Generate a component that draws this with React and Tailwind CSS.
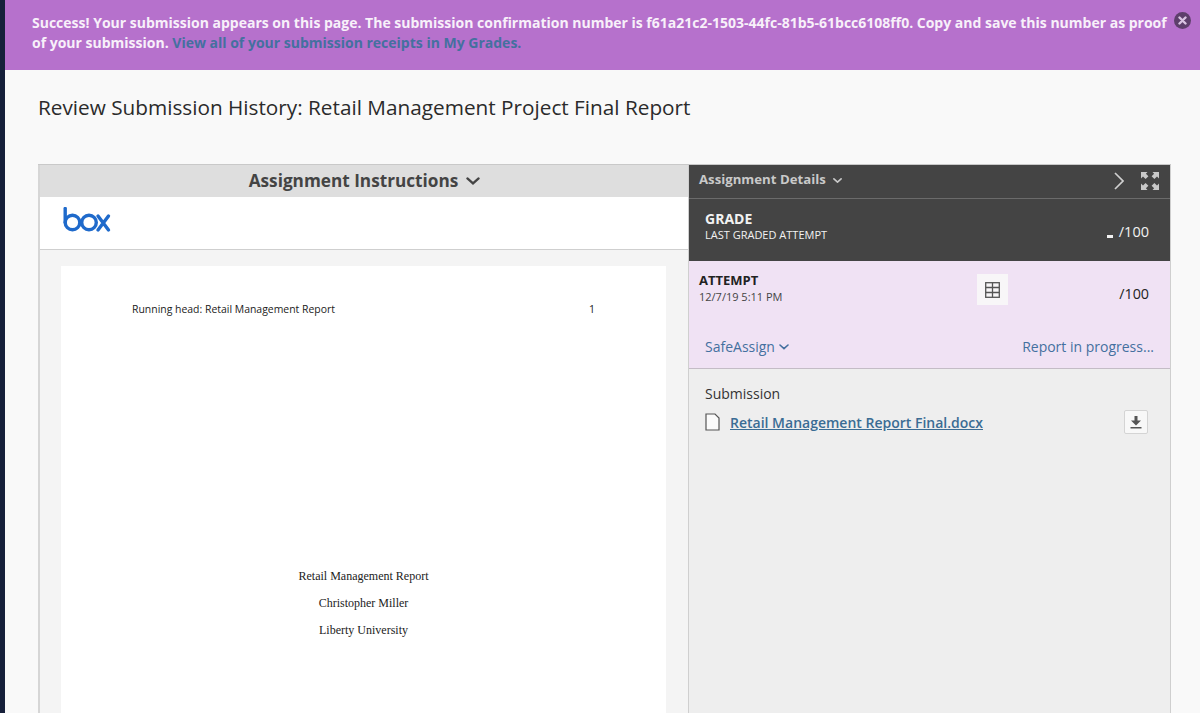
import React from "react";

const BoxLogo = () => (
  <svg width="48" height="26" viewBox="0 0 48 26" fill="none" stroke="#1f6acb" strokeWidth="3.4">
    <path d="M2.2 1.5v14" strokeLinecap="round" />
    <circle cx="9.5" cy="15.5" r="7.3" />
    <circle cx="26" cy="15.5" r="7.3" />
    <path d="M35 9l10.5 14M45.5 9L35 23" strokeLinecap="round" />
  </svg>
);

const ExpandIcon = () => (
  <svg width="18" height="18" viewBox="0 0 18 18" fill="#c9c9c9">
    <path d="M0 0h6.5L4.9 1.7 7.4 4.2 4.6 7 2 4.6 0 6.5zM18 0h-6.5l1.6 1.7-2.5 2.5L13.4 7 16 4.6l2 1.9zM0 18h6.5l-1.6-1.7 2.5-2.5L4.6 11 2 13.4l-2-1.9zM18 18h-6.5l1.6-1.7-2.5-2.5 2.8-2.8 2.6 2.4 2-1.9z" />
  </svg>
);

const GridIcon = () => (
  <svg width="15" height="16" viewBox="0 0 15 16" fill="none" stroke="#555" strokeWidth="1.3">
    <rect x="0.7" y="0.7" width="13.6" height="14.6" />
    <path d="M0.7 5.5h13.6M0.7 10.5h13.6M7.5 0.7v14.6" />
  </svg>
);

const FileIcon = () => (
  <svg width="15" height="18" viewBox="0 0 15 18" fill="#fbfbfb" stroke="#555" strokeWidth="1.2">
    <path d="M1 1h9l4 4v12H1z" />
  </svg>
);

const DownloadIcon = () => (
  <svg width="12" height="13" viewBox="0 0 12 13" fill="#555">
    <path d="M4.5 0h3v4.5H11L6 9.5 1 4.5h3.5zM0.5 11h11v1.6H.5z" />
  </svg>
);

const DownChevron = ({ size, color, width }) => (
  <svg width={size} height={size * 0.6} viewBox="0 0 10 6" fill="none" stroke={color} strokeWidth={width} strokeLinecap="round">
    <path d="M1 1l4 3.6L9 1" />
  </svg>
);

export default function App() {
  return (
    <div className="h-[713px] overflow-hidden flex bg-[#f9f9f9] font-['Open_Sans',sans-serif]">
      <div className="w-[5px] shrink-0 bg-[#16203a]" />
      <div className="flex-1 min-w-0">
        {/* success banner */}
        <div className="h-[70px] bg-[#b671cc] pl-[27px] pt-[13px] flex items-start">
          <p className="w-[1142px] text-[14px] leading-5 font-bold text-[#f8f0fa]">
            Success! Your submission appears on this page. The submission confirmation number is f61a21c2-1503-44fc-81b5-61bcc6108ff0. Copy and save this number as proof of your submission.{" "}
            <span className="text-[#44709f]">View all of your submission receipts in My Grades.</span>
          </p>
          <div className="w-[17px] h-[17px] rounded-full bg-[#5d3f6b] flex items-center justify-center -mt-[1px]">
            <svg width="9" height="9" viewBox="0 0 9 9" stroke="#d9c4e2" strokeWidth="2.4" strokeLinecap="round">
              <path d="M1.5 1.5l6 6M7.5 1.5l-6 6" />
            </svg>
          </div>
        </div>

        <h1 className="pl-[33px] pt-[23px] h-[94px] text-[20.75px] leading-[28px] text-[#2b2b2b]">
          Review Submission History: Retail Management Project Final Report
        </h1>

        <div className="ml-[33px] w-[1133px] flex border-t border-[#c9c9c9]">
          {/* left panel */}
          <div className="w-[650px] shrink-0 border-l-2 border-[#d6d6d6] bg-[#f4f4f4]">
            <div className="h-[32px] bg-[#dedede] flex items-center justify-center gap-[8px] pl-[1px]">
              <span className="text-[17.2px] font-bold text-[#444]">Assignment Instructions</span>
              <DownChevron size={14} color="#444" width={1.6} />
            </div>
            <div className="h-[53px] bg-white border-b border-[#cfcfcf] pl-[23px] pt-[10px]">
              <BoxLogo />
            </div>
            <div className="pl-[21px] pt-4">
              <div className="w-[605px] h-[460px] bg-white pt-[35px]">
                <div className="flex pl-[71px] w-[534px] justify-between text-[10.45px] leading-4 text-[#222]">
                  <span>Running head: Retail Management Report</span>
                  <span>1</span>
                </div>
                <div className="mt-[251px] flex flex-col items-center gap-[11px] font-['Liberation_Serif',serif] text-[12px] leading-4 text-[#222]">
                  <p>Retail Management Report</p>
                  <p>Christopher Miller</p>
                  <p>Liberty University</p>
                </div>
              </div>
            </div>
          </div>

          {/* right panel */}
          <div className="flex-1 min-w-0 border-x border-[#cfcfcf] bg-[#eeeeee]">
            <div className="h-[96px] bg-[#444444]">
              <div className="h-[34px] border-b border-[#6b6b6b] flex items-center pl-[10px] pr-[11px] pb-[4px]">
                <span className="text-[13.2px] font-bold text-[#c9c9c9]">Assignment Details</span>
                <div className="ml-[7px] mt-[2px]">
                  <DownChevron size={9} color="#c9c9c9" width={1.8} />
                </div>
                <svg className="ml-auto mr-[17px] mt-[3px]" width="10" height="18" viewBox="0 0 10 18" fill="none" stroke="#d0d0d0" strokeWidth="1.7">
                  <path d="M1 1l8 8-8 8" />
                </svg>
                <div className="mt-[3px]">
                  <ExpandIcon />
                </div>
              </div>
              <div className="flex justify-between pl-[16px] pr-[21px] pt-[11px]">
                <div>
                  <p className="text-[14px] leading-[18px] font-bold text-[#f2f2f2]">GRADE</p>
                  <p className="text-[11px] leading-[14px] text-[#f2f2f2]">LAST GRADED ATTEMPT</p>
                </div>
                <div className="flex items-center gap-[6px] h-[44px] text-[14.5px] text-[#f2f2f2]">
                  <span className="w-[6px] h-[3px] bg-[#f2f2f2] mt-[8px]" />
                  <span>/100</span>
                </div>
              </div>
            </div>

            <div className="h-[108px] bg-[#f0e2f4] border-b border-[#c4bcc6] pl-[10px] pr-[16px]">
              <div className="h-[75px] flex items-start pt-[10px] pr-[5px]">
                <div>
                  <p className="text-[13px] leading-[18px] font-bold text-[#222]">ATTEMPT</p>
                  <p className="text-[11px] leading-[16px] text-[#444]">12/7/19 5:11 PM</p>
                </div>
                <div className="ml-[194px] mt-[3px] w-[31px] h-[31px] bg-[#f8f6f8] flex items-center justify-center">
                  <GridIcon />
                </div>
                <span className="ml-auto mt-[13px] text-[14.3px] leading-5 text-[#222]">/100</span>
              </div>
              <div className="flex items-center justify-between pl-[6px] text-[14px] text-[#44709f]">
                <span className="flex items-center gap-[4px]">
                  SafeAssign
                  <DownChevron size={10} color="#44709f" width={1.6} />
                </span>
                <span>Report in progress...</span>
              </div>
            </div>

            <div className="pl-[16px] pr-[22px] pt-[15px]">
              <p className="text-[14px] leading-5 text-[#333]">Submission</p>
              <div className="mt-[6px] flex items-center">
                <FileIcon />
                <span className="ml-[10px] text-[14px] font-semibold text-[#3a6c94] underline">Retail Management Report Final.docx</span>
                <div className="ml-auto w-[24px] h-[24px] bg-[#f8f8f8] border border-[#d4d4d4] rounded-[2px] flex items-center justify-center">
                  <DownloadIcon />
                </div>
              </div>
            </div>
          </div>
        </div>
      </div>
    </div>
  );
}
